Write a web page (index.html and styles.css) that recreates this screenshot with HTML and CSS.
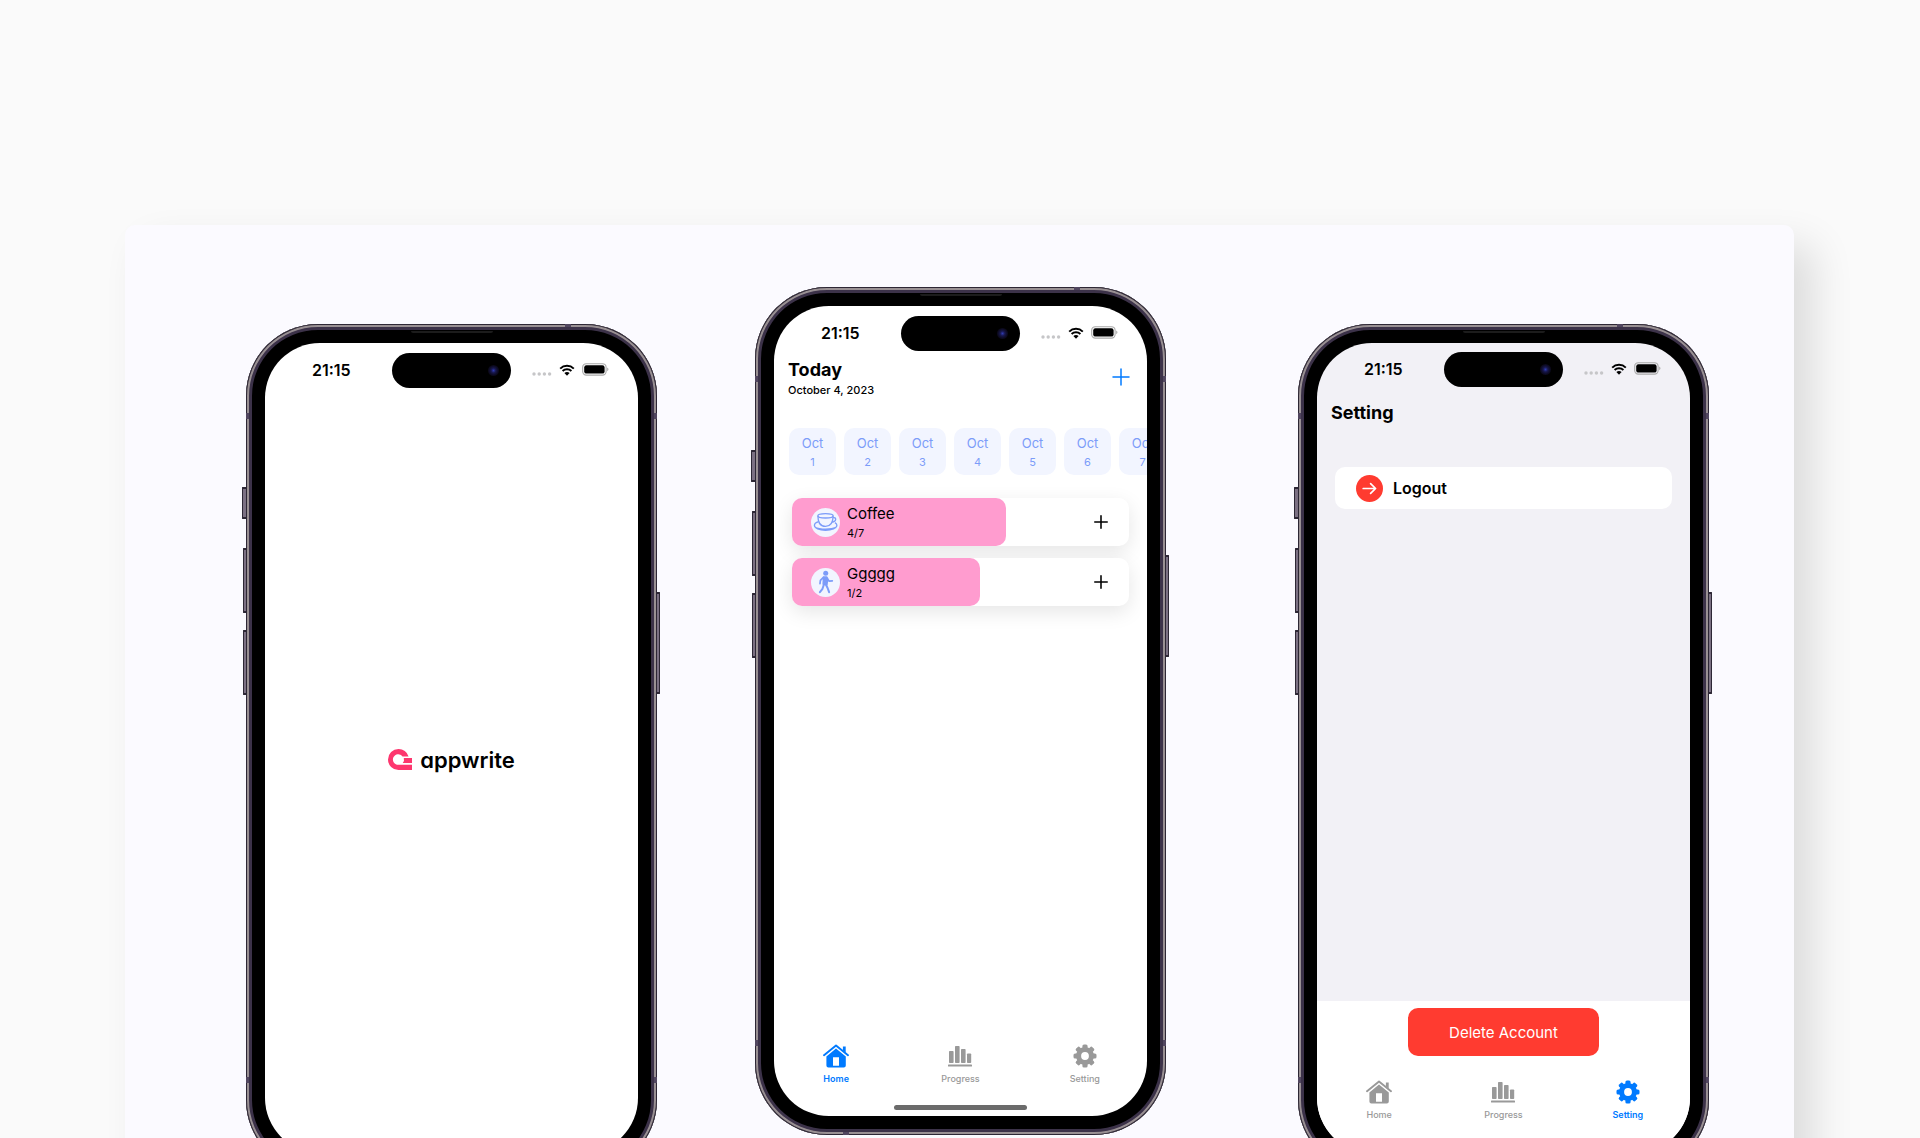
FILE: index.html
```html
<!DOCTYPE html>
<html lang="en">
<head>
<meta charset="utf-8">
<meta name="viewport" content="width=device-width, initial-scale=1">
<title>Habit tracker</title>
<link rel="stylesheet" href="styles.css">
</head>
<body>
<svg class="sprite" aria-hidden="true">
  <symbol id="wifi" viewBox="0 0 16 12">
    <path d="M1.2 4.6a9.8 9.8 0 0 1 13.6 0M3.6 7a6.4 6.4 0 0 1 8.800 0" fill="none" stroke="currentColor" stroke-width="2"/>
    <path d="M5.4 9.1a3.8 3.8 0 0 1 5.2 0L8 11.8z" fill="currentColor"/>
  </symbol>
  <symbol id="battery" viewBox="0 0 27 13">
    <rect x=".7" y=".7" width="23.4" height="11.4" rx="3.6" fill="none" stroke="#a9a9a9" stroke-width="1.1"/>
    <rect x="2.2" y="2.2" width="20.4" height="8.4" rx="2.2" fill="#000"/>
    <path d="M25.2 4.6c1.7.6 1.7 3 0 3.6z" fill="#a9a9a9"/>
  </symbol>
  <symbol id="dots" viewBox="0 0 20 4">
    <g fill="#c6c6c8"><circle cx="2" cy="2" r="1.7"/><circle cx="7.2" cy="2" r="1.7"/><circle cx="12.4" cy="2" r="1.7"/><circle cx="17.6" cy="2" r="1.7"/></g>
  </symbol>
  <symbol id="home" viewBox="0 0 26 24">
    <path d="M1 11.2 13 1.4l12 9.8" fill="none" stroke="currentColor" stroke-width="1.9" stroke-linecap="round" stroke-linejoin="round"/>
    <path d="M19.9 2.6h2.8v6.2l-2.8-2.3z" fill="currentColor"/>
    <path fill-rule="evenodd" d="M13 4.4l9.8 8v9q0 2-2 2H5.400q-2 0-2-2v-9zM10 13.200v8.600h6v-8.600z" fill="currentColor"/>
  </symbol>
  <symbol id="chart" viewBox="0 0 24 21">
    <g fill="currentColor"><rect x="1" y="5" width="4.600" height="12" rx=".8"/><rect x="7" y="0" width="4.600" height="17" rx=".8"/><rect x="13" y="3" width="4.600" height="14" rx=".8"/><rect x="19" y="7.500" width="4.200" height="9.500" rx=".8"/><rect x="0" y="18.500" width="24" height="2" rx=".6"/></g>
  </symbol>
  <symbol id="gear" viewBox="0 0 24 24">
    <g fill="currentColor">
      <path fill-rule="evenodd" d="M12 3a9 9 0 1 0 0 18 9 9 0 0 0 0-18zm0 5.100a3.900 3.900 0 1 1 0 7.800 3.900 3.900 0 0 1 0-7.800z"/>
      <g id="teeth"><rect x="9.400" y=".5" width="5.200" height="5" rx="1.600"/><rect x="9.400" y="18.500" width="5.200" height="5" rx="1.600"/><rect x=".5" y="9.400" width="5" height="5.200" rx="1.600"/><rect x="18.500" y="9.400" width="5" height="5.200" rx="1.600"/></g>
      <use href="#teeth" transform="rotate(45 12 12)"/>
    </g>
  </symbol>
  <symbol id="plus" viewBox="0 0 18 18">
    <path d="M9 1v16M1 9h16" fill="none" stroke="currentColor" stroke-linecap="round"/>
  </symbol>
</svg>

<main class="stage">
  <section class="showcase">

    <article class="phone phone--lower phone--splash">
      <i class="key key--mute"></i><i class="key key--up"></i><i class="key key--down"></i><i class="key key--power"></i>
      <i class="band band--tl"></i><i class="band band--tr"></i><i class="band band--bl"></i><i class="band band--br"></i><i class="band band--top"></i><i class="band band--bottom"></i>
      <i class="speaker"></i>
      <div class="screen">
        <header class="status">
          <time class="clock">21:15</time>
          <div class="island"><i class="lens"></i></div>
          <div class="signals"><svg class="dots"><use href="#dots"/></svg><svg class="wifi"><use href="#wifi"/></svg><svg class="battery"><use href="#battery"/></svg></div>
        </header>
        <div class="splash">
          <svg class="brand-mark" viewBox="0 0 24 21" aria-hidden="true">
            <path d="M10.500 0a10.500 10.500 0 0 0 0 21H24v-5.200H10.500a5.300 5.300 0 1 1 4-8.400h6.100A10.500 10.500 0 0 0 10.500 0z" fill="#fd366e"/>
            <path d="M15.800 9H24v5h-9.300a5.300 5.300 0 0 0 1.100-5z" fill="#fd366e"/>
          </svg>
          <span class="brand-name">appwrite</span>
        </div>
      </div>
    </article>

    <article class="phone phone--home">
      <i class="key key--mute"></i><i class="key key--up"></i><i class="key key--down"></i><i class="key key--power"></i>
      <i class="band band--tl"></i><i class="band band--tr"></i><i class="band band--bl"></i><i class="band band--br"></i><i class="band band--top"></i><i class="band band--bottom"></i>
      <i class="speaker"></i>
      <div class="screen">
        <header class="status">
          <time class="clock">21:15</time>
          <div class="island"><i class="lens"></i></div>
          <div class="signals"><svg class="dots"><use href="#dots"/></svg><svg class="wifi"><use href="#wifi"/></svg><svg class="battery"><use href="#battery"/></svg></div>
        </header>
        <div class="heading">
          <div>
            <h1 class="title">Today</h1>
            <p class="date">October 4, 2023</p>
          </div>
          <button class="add" type="button" aria-label="Add habit"><svg><use href="#plus"/></svg></button>
        </div>
        <ol class="days">
          <li class="day"><span class="month">Oct</span><span class="number">1</span></li>
          <li class="day"><span class="month">Oct</span><span class="number">2</span></li>
          <li class="day"><span class="month">Oct</span><span class="number">3</span></li>
          <li class="day"><span class="month">Oct</span><span class="number">4</span></li>
          <li class="day"><span class="month">Oct</span><span class="number">5</span></li>
          <li class="day"><span class="month">Oct</span><span class="number">6</span></li>
          <li class="day"><span class="month">Oct</span><span class="number">7</span></li>
        </ol>
        <ul class="habits">
          <li class="habit">
            <div class="fill" style="width:63.600%">
              <span class="badge">
                <svg viewBox="0 0 29 29" fill="none" stroke="#7c9cf9" stroke-width="1.300" aria-hidden="true">
                  <ellipse cx="14.500" cy="7.800" rx="7.600" ry="2.200"/>
                  <path d="M6.900 7.800c0 6 1.600 10.600 7.600 10.600s7.600-4.600 7.600-10.600M21.900 9.700c3.600-1 4.200 3.900-1.200 4.600"/>
                  <path d="M7.600 13.600c-2.500.8-4.200 2-4.200 3.700 0 3 5 5 11.100 5s11.400-2 11.400-5c0-1-.8-2-2-2.600M4 19.400c5 2.400 16 2.400 21.400 0"/>
                </svg>
              </span>
              <div><h2 class="habit-name">Coffee</h2><p class="count">4/7</p></div>
            </div>
            <button class="bump" type="button" aria-label="Log Coffee"><svg><use href="#plus"/></svg></button>
          </li>
          <li class="habit">
            <div class="fill" style="width:55.700%">
              <span class="badge">
                <svg viewBox="0 0 29 29" fill="none" stroke="#7c9cf9" stroke-linecap="round" stroke-linejoin="round" aria-hidden="true">
                  <circle cx="14.700" cy="5.200" r="2.500" fill="#7c9cf9" stroke="none"/>
                  <path d="M12.600 9h3l1 1.500-.7 6.200-3.700-.6z" fill="#7c9cf9" stroke-width="1.600"/>
                  <path d="M12.400 9.400l-3 3-.4 3.300M16.700 11.200l1.500 1.900 3.100-.2" stroke-width="1.700"/>
                  <path d="M15 16.700l1.600 3.300 1.500 4.200M12.800 16.800l-1.300 4-2.600 3.300" stroke-width="2"/>
                </svg>
              </span>
              <div><h2 class="habit-name">Ggggg</h2><p class="count">1/2</p></div>
            </div>
            <button class="bump" type="button" aria-label="Log Ggggg"><svg><use href="#plus"/></svg></button>
          </li>
        </ul>
        <nav class="tabs">
          <a class="tab tab--active" href="#home-tab"><svg class="ico-home"><use href="#home"/></svg>Home</a>
          <a class="tab" href="#progress-tab"><svg class="ico-chart"><use href="#chart"/></svg>Progress</a>
          <a class="tab" href="#setting-tab"><svg class="ico-gear"><use href="#gear"/></svg>Setting</a>
        </nav>
        <i class="grabber"></i>
      </div>
    </article>

    <article class="phone phone--lower phone--setting">
      <i class="key key--mute"></i><i class="key key--up"></i><i class="key key--down"></i><i class="key key--power"></i>
      <i class="band band--tl"></i><i class="band band--tr"></i><i class="band band--bl"></i><i class="band band--br"></i><i class="band band--top"></i><i class="band band--bottom"></i>
      <i class="speaker"></i>
      <div class="screen screen--grey">
        <header class="status">
          <time class="clock">21:15</time>
          <div class="island"><i class="lens"></i></div>
          <div class="signals"><svg class="dots"><use href="#dots"/></svg><svg class="wifi"><use href="#wifi"/></svg><svg class="battery"><use href="#battery"/></svg></div>
        </header>
        <h1 class="title title--setting">Setting</h1>
        <button class="logout" type="button">
          <svg viewBox="0 0 27 27" aria-hidden="true"><circle cx="13.500" cy="13.500" r="13.500" fill="#ff3b30"/><path d="M7.200 13.500h12.200M14.600 8.600l5 4.900-5 4.900" fill="none" stroke="#fff" stroke-width="1.700" stroke-linecap="round" stroke-linejoin="round"/></svg>
          Logout
        </button>
        <div class="sheet">
          <button class="delete" type="button">Delete Account</button>
          <nav class="tabs">
            <a class="tab" href="#home-tab"><svg class="ico-home"><use href="#home"/></svg>Home</a>
            <a class="tab" href="#progress-tab"><svg class="ico-chart"><use href="#chart"/></svg>Progress</a>
            <a class="tab tab--active" href="#setting-tab"><svg class="ico-gear"><use href="#gear"/></svg>Setting</a>
          </nav>
          <i class="grabber"></i>
        </div>
      </div>
    </article>

  </section>
</main>
</body>
</html>
```
FILE: styles.css
```css
* { box-sizing: border-box; }

body {
  margin: 0;
  background: #fafafa;
  color: #000;
  font-family: Inter, "Liberation Sans", sans-serif;
}

h1, h2, p, ol, ul { margin: 0; padding: 0; }
ol, ul { list-style: none; }
button { border: 0; padding: 0; font: inherit; color: inherit; background: none; }
svg { display: block; }
.sprite { display: none; }

.stage {
  height: 100vh;
  overflow: hidden;
  padding: 225px 126px 0 125px;
}

.showcase {
  display: grid;
  grid-template-columns: 121fr 411px 98fr 411px 132fr 411px 85fr;
  align-items: start;
  padding: 62px 0 100px;
  border-radius: 10px;
  background: #fbfaff;
  box-shadow: 20px 20px 40px rgba(0, 0, 0, .12);
}

/* Device */
.phone {
  position: relative;
  padding: 19px;
  border-radius: 72px;
  background: #000;
  box-shadow: inset 0 0 0 1px #2d2735, inset 0 0 0 3px #999093, inset 0 0 0 6px #3c3249;
}
.phone--lower { margin-top: 37px; }
.phone--splash { grid-column: 2; }
.phone--home { grid-column: 4; }
.phone--setting { grid-column: 6; }

.key {
  position: absolute;
  left: -3px;
  width: 3px;
  border: solid #2d2735;
  border-width: 2px 0 2px 1px;
  border-radius: 1px 0 0 1px;
  background: #7b7083;
}
.key--mute { left: -4px; width: 4px; top: 163px; height: 32px; }
.key--up { top: 224px; height: 65px; }
.key--down { top: 306px; height: 65px; }
.key--power {
  left: auto;
  right: -3px;
  top: 268px;
  height: 102px;
  border-width: 2px 1px 2px 0;
  border-radius: 0 1px 1px 0;
}

.band { position: absolute; width: 3px; height: 6px; background: #51465f; }
.band--tl { left: 0; top: 89px; }
.band--tr { right: 0; top: 89px; }
.band--bl { left: 0; bottom: 89px; }
.band--br { right: 0; bottom: 89px; }
.band--top { top: 0; right: 86px; width: 6px; height: 3px; }
.band--bottom { bottom: 0; left: 88px; width: 6px; height: 3px; }

.speaker {
  position: absolute;
  top: 7px;
  left: 50%;
  width: 82px;
  height: 2px;
  margin-left: -41px;
  border-radius: 0 0 2px 2px;
  background: #1c1c1c;
}

.screen {
  display: flex;
  flex-direction: column;
  aspect-ratio: 373 / 810;
  overflow: hidden;
  border-radius: 55px;
  background: #fff;
}
.screen--grey { background: #f2f1f6; }

/* Status bar */
.status {
  display: grid;
  grid-template-columns: 1fr 119px 1fr;
  align-items: center;
  height: 35px;
  margin-top: 10px;
}
.phone--setting .status { margin-top: 9px; }
.clock { padding: 0 0 2px 47px; font-size: 16px; line-height: 20px; font-weight: 600; }
.island {
  display: flex;
  align-items: center;
  justify-content: flex-end;
  height: 35px;
  padding-right: 12px;
  border-radius: 18px;
  background: #000;
}
.lens {
  width: 11px;
  height: 11px;
  border-radius: 50%;
  background: radial-gradient(circle, #2f3bb0 0, #17174d 30%, #0c0a20 60%, #050308 100%);
}
.signals { display: flex; align-items: center; justify-content: flex-end; gap: 7px; padding: 0 29px 2px 0; }
.dots { width: 20px; height: 4px; margin-top: 8px; }
.wifi { width: 16px; height: 12px; }
.battery { width: 27px; height: 13px; }

/* Splash */
.splash { flex: 1; display: flex; align-items: center; justify-content: center; gap: 8px; padding-bottom: 22px; }
.brand-mark { width: 24px; height: 21px; }
.brand-name { font-size: 22px; line-height: 28px; font-weight: 600; font-feature-settings: "cv11"; }

/* Today */
.heading {
  display: flex;
  align-items: flex-start;
  justify-content: space-between;
  margin: 8px 17px 0 14px;
}
.title { font-size: 18px; line-height: 22px; font-weight: 700; }
.title--setting { margin: 15px 14px 0; }
.date { font-size: 11px; line-height: 18px; font-weight: 500; }
.add { margin-top: 9px; color: #007aff; stroke-width: 1.5; }
.add svg { width: 18px; height: 18px; }

.days { display: flex; gap: 8px; margin: 29px 0 0 15px; }
.day {
  flex: 0 0 47px;
  display: flex;
  flex-direction: column;
  align-items: center;
  height: 47px;
  padding-top: 6px;
  border-radius: 10px;
  background: #f2f5ff;
  color: #7c9cf9;
}
.month { font-size: 13px; line-height: 18px; }
.number { font-size: 11px; line-height: 20px; }

.habits { display: grid; gap: 12px; margin: 23px 18px 0; }
.habit {
  display: grid;
  grid-template-columns: 1fr 14px 21px;
  align-items: center;
  border-radius: 10px;
  background: #fff;
  box-shadow: 0 6px 20px rgba(0, 0, 0, .1);
}
.fill {
  grid-area: 1 / 1 / 2 / 4;
  display: flex;
  align-items: center;
  gap: 7px;
  height: 48px;
  padding-left: 19px;
  border-radius: 10px;
  background: #ff9ccf;
}
.badge { width: 29px; height: 29px; border-radius: 50%; background: #f2f5ff; }
.habit-name { padding-top: 2px; font-size: 15px; line-height: 20px; font-weight: 400; }
.count { font-size: 11px; line-height: 18px; }
.bump { grid-area: 1 / 2; stroke-width: 2; }
.bump svg { width: 14px; height: 14px; }

/* Tab bar */
.tabs { display: grid; grid-template-columns: repeat(3, 1fr); margin-top: auto; }
.tab {
  display: grid;
  grid-template-rows: 24px 14px;
  row-gap: 4px;
  align-items: center;
  justify-items: center;
  color: #999;
  font-size: 9px;
  line-height: 14px;
  font-weight: 500;
  text-decoration: none;
}
.tab--active { color: #007aff; font-weight: 600; }
.ico-home { width: 26px; height: 24px; }
.ico-chart { width: 24px; height: 21px; }
.ico-gear { width: 24px; height: 24px; }
.grabber {
  align-self: center;
  width: 133px;
  height: 5px;
  margin: 19px 0 6px;
  border-radius: 3px;
  background: #6b6b6b;
}

/* Setting */
.logout {
  display: flex;
  align-items: center;
  gap: 10px;
  height: 42px;
  margin: 43px 18px 0;
  padding-left: 21px;
  border-radius: 10px;
  background: #fff;
  font-size: 16px;
  font-weight: 600;
}
.logout svg { width: 27px; height: 27px; }
.sheet { display: flex; flex-direction: column; margin-top: auto; padding-bottom: 1px; background: #fff; }
.delete {
  align-self: center;
  width: 191px;
  height: 48px;
  margin: 7px 0 24px;
  border-radius: 10px;
  background: #ff3b30;
  color: #fff;
  font-size: 15px;
}
```
